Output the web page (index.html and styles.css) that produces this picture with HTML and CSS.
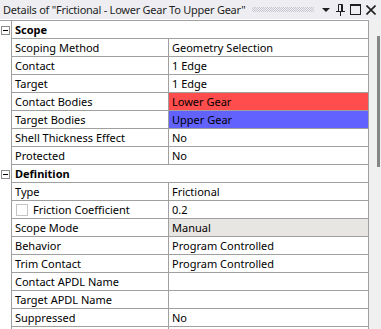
FILE: index.html
```html
<!DOCTYPE html>
<html>
<head>
<meta charset="utf-8">
<link rel="stylesheet" href="styles.css">
</head>
<body>
<div class="window">
  <div class="titlebar">
    <span class="title">Details of "Frictional - Lower Gear To Upper Gear"</span>
    <span class="grip"></span>
    <span class="tools">
      <svg class="ico" width="9" height="12" viewBox="0 0 9 12"><path d="M0 4 L8 4 L4 8 Z" fill="#1e1e1e"/></svg>
      <svg class="ico" width="9" height="13" viewBox="0 0 9 13"><path d="M2.5 1.5 H6.5 V8 M2.5 1.5 V8 M0 8.5 H9 M4.5 9 V13 M5.5 2 V8" stroke="#1e1e1e" stroke-width="1" fill="none"/></svg>
      <svg class="ico" width="11" height="11" viewBox="0 0 11 11"><rect x="0.5" y="0.5" width="10" height="10" fill="none" stroke="#1e1e1e"/><path d="M0 1.5 H11" stroke="#1e1e1e"/></svg>
      <svg class="ico" width="10" height="10" viewBox="0 0 10 10"><path d="M0.5 0.5 L9.5 9.5 M9.5 0.5 L0.5 9.5" stroke="#1e1e1e" stroke-width="1.6"/></svg>
    </span>
  </div>
  <div class="body">
    <div class="grid">
      <div class="row head"><span class="gut"><span class="minus"></span></span><span class="cell full">Scope</span></div>
      <div class="row"><span class="gut"></span><span class="cell name">Scoping Method</span><span class="cell val">Geometry Selection</span></div>
      <div class="row"><span class="gut"></span><span class="cell name">Contact</span><span class="cell val">1 Edge</span></div>
      <div class="row"><span class="gut"></span><span class="cell name">Target</span><span class="cell val">1 Edge</span></div>
      <div class="row"><span class="gut"></span><span class="cell name">Contact Bodies</span><span class="cell val red">Lower Gear</span></div>
      <div class="row"><span class="gut"></span><span class="cell name">Target Bodies</span><span class="cell val blue">Upper Gear</span></div>
      <div class="row"><span class="gut"></span><span class="cell name">Shell Thickness Effect</span><span class="cell val">No</span></div>
      <div class="row"><span class="gut"></span><span class="cell name">Protected</span><span class="cell val">No</span></div>
      <div class="row head"><span class="gut"><span class="minus"></span></span><span class="cell full">Definition</span></div>
      <div class="row"><span class="gut"></span><span class="cell name">Type</span><span class="cell val">Frictional</span></div>
      <div class="row"><span class="gut"></span><span class="cell name"><span class="check"></span>Friction Coefficient</span><span class="cell val">0.2</span></div>
      <div class="row"><span class="gut"></span><span class="cell name">Scope Mode</span><span class="cell val grey">Manual</span></div>
      <div class="row"><span class="gut"></span><span class="cell name">Behavior</span><span class="cell val">Program Controlled</span></div>
      <div class="row"><span class="gut"></span><span class="cell name">Trim Contact</span><span class="cell val">Program Controlled</span></div>
      <div class="row"><span class="gut"></span><span class="cell name">Contact APDL Name</span><span class="cell val"></span></div>
      <div class="row"><span class="gut"></span><span class="cell name">Target APDL Name</span><span class="cell val"></span></div>
      <div class="row"><span class="gut"></span><span class="cell name">Suppressed</span><span class="cell val">No</span></div>
      <div class="row"><span class="gut"></span><span class="cell name"></span><span class="cell val"></span></div>
    </div>
    <div class="scroll"><div class="thumb"></div></div>
  </div>
</div>
</body>
</html>
```
FILE: styles.css
```css
html, body {
  margin: 0;
  padding: 0;
  background: #ffffff;
  overflow: hidden;
}
.window {
  width: 381px;
  height: 329px;
  overflow: hidden;
  font-family: "Noto Sans", "DejaVu Sans", sans-serif;
  font-size: 11px;
  color: #000;
}
.titlebar {
  height: 19px;
  background: #eeeef2;
  display: flex;
  align-items: center;
  padding-left: 3px;
  color: #1e1e1e;
}
.title {
  white-space: nowrap;
  line-height: 19px;
  font-size: 11px;
  letter-spacing: -0.25px;
}
.grip {
  flex: 1;
  height: 5px;
  margin: 0 8px 0 6px;
  background: repeating-conic-gradient(#c8c8d0 0 25%, transparent 0 50%) 0 0 / 2px 2px;
}
.tools {
  display: flex;
  align-items: center;
  gap: 5px;
  padding-right: 5px;
}
.ico { display: block; }
.body {
  display: flex;
  padding-top: 1px;
}
.grid {
  width: 369px;
  border-top: 1px solid #a0a0a0;
}
.row {
  display: grid;
  grid-template-columns: 11px 157px 201px;
  height: 18px;
}
.gut {
  display: flex;
  align-items: flex-start;
  padding-top: 5px;
  padding-left: 1px;
}
.minus {
  width: 7px;
  height: 7px;
  border: 1px solid #8c8c8c;
  position: relative;
  background: #fff;
}
.minus::after {
  content: "";
  position: absolute;
  left: 1px;
  top: 3px;
  width: 5px;
  height: 1px;
  background: #000;
}
.cell {
  border-left: 1px solid #a0a0a0;
  border-bottom: 1px solid #a0a0a0;
  line-height: 17px;
  padding-left: 3px;
  white-space: nowrap;
  overflow: hidden;
  display: flex;
  align-items: center;
}
.full {
  grid-column: 2 / 4;
  border-right: 1px solid #a0a0a0;
  font-weight: bold;
}
.val {
  border-right: 1px solid #a0a0a0;
}
.red { background: #ff4d4d; }
.blue { background: #6262ff; }
.grey { background: #e8e6e2; }
.check {
  width: 10px;
  height: 10px;
  border: 1px solid #c4c4c4;
  margin: 0 5px 0 1px;
  flex: none;
}
.scroll {
  width: 12px;
  background: #f0f0f0;
  padding: 17px 0 0 8px;
  box-sizing: border-box;
  margin-top: -1px;
}
.thumb {
  width: 3px;
  height: 131px;
  background: #868686;
}
```
